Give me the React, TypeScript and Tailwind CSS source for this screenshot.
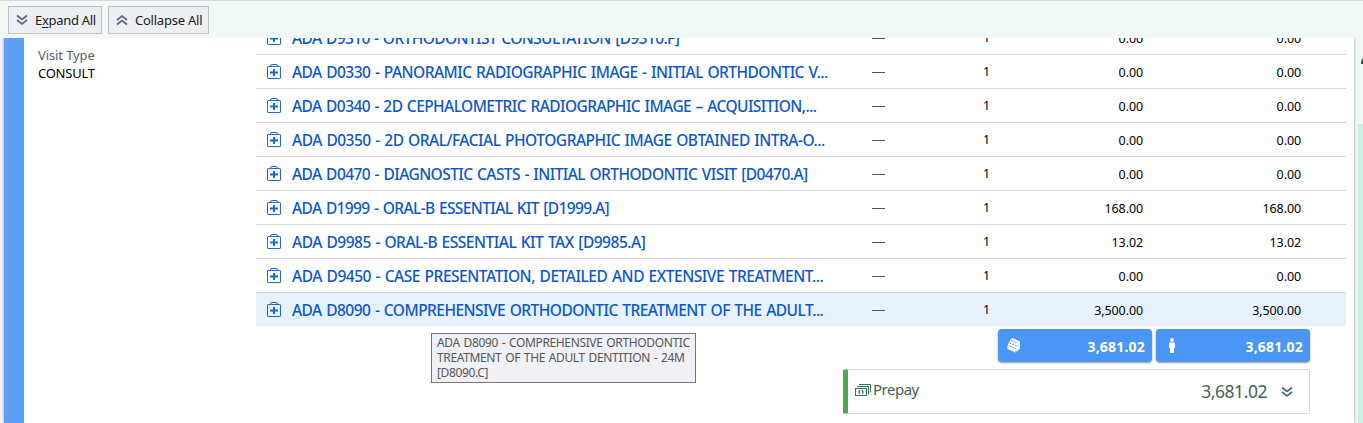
import React from "react";

type Row = { name: string; amount: string; tracking: string };

const rows: Row[] = [
  { name: "ADA D9310 - ORTHODONTIST CONSULTATION [D9310.F]", amount: "0.00", tracking: "tracking-[-0.61px]" },
  { name: "ADA D0330 - PANORAMIC RADIOGRAPHIC IMAGE - INITIAL ORTHDONTIC V...", amount: "0.00", tracking: "tracking-[-0.53px]" },
  { name: "ADA D0340 - 2D CEPHALOMETRIC RADIOGRAPHIC IMAGE – ACQUISITION,...", amount: "0.00", tracking: "tracking-[-0.57px]" },
  { name: "ADA D0350 - 2D ORAL/FACIAL PHOTOGRAPHIC IMAGE OBTAINED INTRA-O...", amount: "0.00", tracking: "tracking-[-0.49px]" },
  { name: "ADA D0470 - DIAGNOSTIC CASTS - INITIAL ORTHODONTIC VISIT [D0470.A]", amount: "0.00", tracking: "tracking-[-0.56px]" },
  { name: "ADA D1999 - ORAL-B ESSENTIAL KIT [D1999.A]", amount: "168.00", tracking: "tracking-[-0.62px]" },
  { name: "ADA D9985 - ORAL-B ESSENTIAL KIT TAX [D9985.A]", amount: "13.02", tracking: "tracking-[-0.48px]" },
  { name: "ADA D9450 - CASE PRESENTATION, DETAILED AND EXTENSIVE TREATMENT...", amount: "0.00", tracking: "tracking-[-0.46px]" },
  { name: "ADA D8090 - COMPREHENSIVE ORTHODONTIC TREATMENT OF THE ADULT...", amount: "3,500.00", tracking: "tracking-[-0.53px]" },
];

function Chevrons({ up = false }: { up?: boolean }) {
  return (
    <svg width="12" height="12" viewBox="0 0 12 12" fill="none" stroke="#53687a" strokeWidth="1.7" className={up ? "rotate-180" : ""}>
      <path d="M1 1.5 6 5.5 11 1.5M1 6 6 10 11 6" />
    </svg>
  );
}

function KitIcon() {
  return (
    <svg width="14" height="15" viewBox="0 0 14 15" fill="none" stroke="#1b6add" className="block">
      <rect x=".5" y="2.5" width="13" height="12" rx=".6" />
      <path d="M3.5 2.500v-.5q0-1.500 1.500-1.500h4q1.500 0 1.500 1.500v.5" />
      <path d="M7 5v7M3 8.500h8" strokeWidth="2" />
    </svg>
  );
}

function BoxIcon() {
  return (
    <svg width="14" height="15" viewBox="0 0 14 15" className="block">
      <path d="M4.2.5 5.5 0 13 3.4v7L8.7 14.5.5 11V8.6L1.7 5z" fill="#fff" />
      <path d="M4 2.300l6.200 2.600M2 7.700l7 3" stroke="#4996f7" strokeWidth=".7" />
      <path d="M2.800 5l6.800 2.900" stroke="#4996f7" strokeWidth="1.200" strokeDasharray="1.500 1.500" />
      <path d="M9 11.500v3" stroke="#4996f7" strokeWidth=".6" />
    </svg>
  );
}

function PersonIcon() {
  return (
    <svg width="6" height="15" viewBox="0 0 6 15" fill="#fff" className="block">
      <circle cx="3" cy="1.9" r="1.9" />
      <path d="M1 4.5h4q1 0 1 1V10H5v5H1v-5H0V5.500q0-1 1-1z" />
    </svg>
  );
}

function CashIcon() {
  return (
    <svg width="16" height="12" viewBox="0 0 16 12" fill="none" stroke="#2e7d57" className="block">
      <path d="M4 .5h11.500v8M2 2.500h11.500v8" />
      <rect x=".5" y="4.500" width="11" height="7" />
      <path d="M5 6.200Q3 8 5 9.800M7 6.200Q9 8 7 9.800" strokeWidth="1.300" />
    </svg>
  );
}

function LineItem({ row, last }: { row: Row; last: boolean }) {
  return (
    <div
      className={
        "grid grid-cols-[587px_64px_83px_153px_158px_45px] items-center " +
        (last ? "h-[33px] bg-[#e7f2fe]" : "h-[34px] border-b border-[#d6d8da]")
      }
    >
      <div className="flex items-center pl-[11px]">
        <KitIcon />
        <span className={"ml-[11px] whitespace-nowrap pt-px text-[15.5px] font-medium leading-5 text-[#0b57d0] [word-spacing:1px] " + row.tracking}>
          {row.name}
        </span>
      </div>
      <div className="ml-[29px] mt-px h-px w-[13px] bg-[#555]" />
      <div className="pl-[76px] pt-px text-[12.500px] leading-5">1</div>
      <div className="pt-[2px] text-right text-[12.500px] leading-5 tracking-[-0.1px]">{row.amount}</div>
      <div className="pt-[2px] text-right text-[12.500px] leading-5 tracking-[-0.1px]">{row.amount}</div>
    </div>
  );
}

export default function App() {
  return (
    <div className="flex h-[423px] w-[1363px] flex-col overflow-hidden bg-[#f0f9f6] font-['Noto_Sans','Open_Sans',sans-serif] text-black">
      <header className="flex h-[38px] shrink-0 gap-[6px] border-t border-[#d5dbdd] pl-2 pt-[5px]">
        <button className="flex h-7 w-[94px] items-center border border-[#bcc4ca] bg-[#eceff3] pl-[7px] text-[13px] text-[#202124]">
          <Chevrons />
          <span className="ml-[7px] whitespace-nowrap pt-px tracking-[-0.3px]">
            E<span className="underline underline-offset-2">x</span>pand All
          </span>
        </button>
        <button className="flex h-7 w-[101px] items-center border border-[#bcc4ca] bg-[#eceff3] pl-[7px] text-[13px] text-[#202124]">
          <Chevrons up />
          <span className="ml-[7px] whitespace-nowrap pt-px tracking-[-0.23px]">Collapse All</span>
        </button>
      </header>

      <div className="flex h-[385px] overflow-hidden">
        <main className="ml-1 flex w-[1350px] shrink-0 overflow-hidden bg-white shadow-[0_0_3px_#8fa39c]">
          <div className="w-5 shrink-0 bg-[#5f9ff8]" />
          <aside className="w-[232px] shrink-0 pl-[14px] pt-[8px] text-[13px] leading-[18px]">
            <div className="tracking-[-0.1px] text-[#606468]">Visit Type</div>
            <div className="tracking-[-0.25px]">CONSULT</div>
          </aside>

          <section className="-mt-[17px] w-[1090px] shrink-0">
            {rows.map((row, i) => (
              <LineItem key={row.name} row={row} last={i === rows.length - 1} />
            ))}

            <div className="flex">
              <div className="ml-[175px] mt-[7px] h-[50px] w-[265px] shrink-0 whitespace-nowrap border border-[#76767a] bg-[#f0f1f7] pl-[5px] pt-px text-[12px] leading-[15px] tracking-[-0.36px] text-[#575757] [word-spacing:1px]">
                ADA D8090 - COMPREHENSIVE ORTHODONTIC
                <br />
                TREATMENT OF THE ADULT DENTITION - 24M
                <br />
                [D8090.C]
              </div>

              <div className="ml-[146px] w-[468px] shrink-0">
                <div className="mt-[3px] flex justify-end gap-1 text-[14px] font-bold text-white">
                  <div className="flex h-[33px] w-[154px] items-center justify-between rounded-[4px] bg-[#4996f7] pl-[9px] pr-[7px] shadow-[0_1px_2px_#999]">
                    <BoxIcon />
                    <span className="pt-px tracking-[0.200px]">3,681.02</span>
                  </div>
                  <div className="flex h-[33px] w-[154px] items-center justify-between rounded-[4px] bg-[#4996f7] pl-[13px] pr-[7px] shadow-[0_1px_2px_#999]">
                    <PersonIcon />
                    <span className="pt-px tracking-[0.200px]">3,681.02</span>
                  </div>
                </div>
                <div className="ml-px mt-[7px] flex h-[45px] items-center rounded-[2px] border border-l-[5px] border-[#d8dadb] border-l-[#4ea64e] pl-[7px] text-[#3f6553]">
                  <div className="pb-[3px]">
                    <CashIcon />
                  </div>
                  <span className="ml-[2px] pb-[5px] text-[15px] tracking-[-0.5px]">Prepay</span>
                  <span className="ml-auto text-[17.500px] tracking-[-0.45px]">3,681.02</span>
                  <span className="ml-[14px] mr-4">
                    <Chevrons />
                  </span>
                </div>
              </div>
            </div>
          </section>
        </main>

        <div className="ml-1 w-[5px] shrink-0 overflow-hidden">
          <div className="flex h-[86px] justify-end pt-5">
            <svg width="2" height="6" viewBox="0 0 2 6" fill="#3c5a50">
              <path d="M0 3 2 0v6H0z" />
            </svg>
          </div>
          <div className="h-[299px] bg-[#cdeee2]" />
        </div>
      </div>
    </div>
  );
}
